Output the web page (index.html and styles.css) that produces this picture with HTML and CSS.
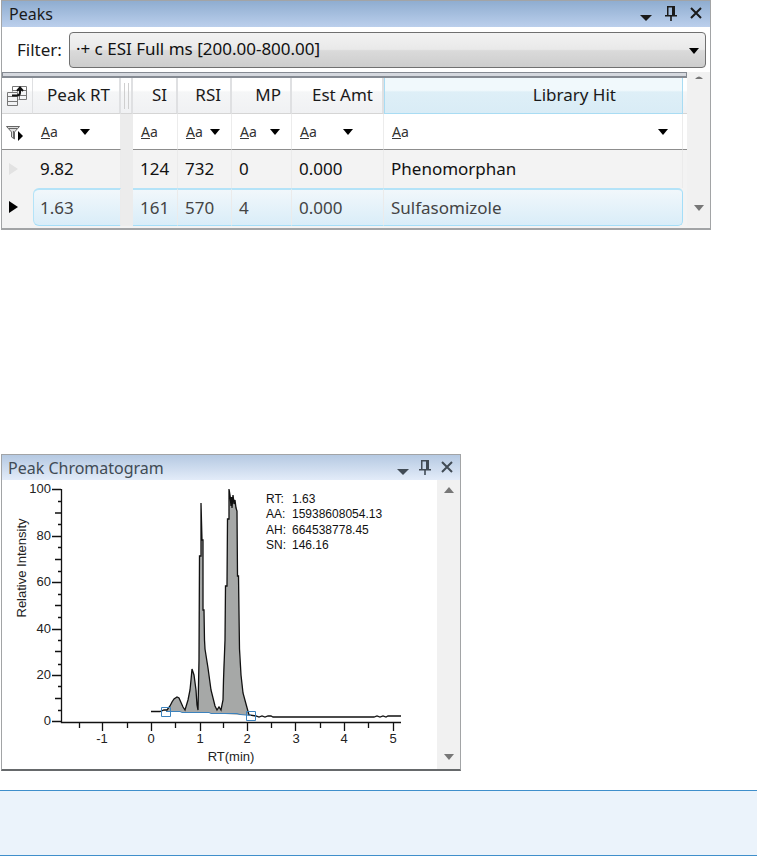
FILE: index.html
```html
<!DOCTYPE html>
<html lang="en">
<head>
<meta charset="utf-8">
<title>Peaks</title>
<link rel="stylesheet" href="styles.css">
</head>
<body>
<section class="panel peaks">
  <header class="titlebar">
    <h2>Peaks</h2>
    <button class="tool" aria-label="Menu"><svg width="14" height="20"><path d="M1 11h12l-6 6z"/></svg></button>
    <button class="tool" aria-label="Pin"><svg width="14" height="20"><path d="M3 2h8v9h2v1.500H7.800V17H6.200v-4.500H1V11h2zM4.500 3.500V11H8V3.500z" fill-rule="evenodd"/></svg></button>
    <button class="tool" aria-label="Close"><svg width="14" height="20"><path d="M2 4l10 10M12 4l-10 10" class="cross"/></svg></button>
  </header>
  <div class="filterbar">
    <label for="filter">Filter:</label>
    <div class="combo">
      <select id="filter"><option>·+ c ESI Full ms [200.00-800.00]</option></select>
      <svg class="combo-arrow" width="12" height="8"><path d="M1 1h10l-5 6z"/></svg>
    </div>
  </div>
  <div class="grid">
    <div class="grid-main">
      <div class="splitter"></div>
      <table>
        <colgroup><col class="c-ind"><col class="c-rt"><col class="c-fix"><col class="c-si"><col class="c-rsi"><col class="c-mp"><col class="c-est"><col><col class="c-end"></colgroup>
        <thead>
          <tr class="names">
            <th class="ind"><svg width="22" height="24" class="chooser"><path d="M6.500 2.500h14v13h-8M13.500 2.500v13M6.500 6.500h14M13.500 11.500h7M6.500 2.500v5M1.500 8.500h10v13h-10zM1.500 12.500h10M1.500 17.500h10"/><path class="strong" d="M6 11.500h5c2 0 3-1 3-3V4M11 7l3-3.500L17 7"/></svg></th>
            <th>Peak RT</th><th class="fix"><span class="grip"></span></th><th>SI</th><th>RSI</th><th>MP</th><th>Est Amt</th><th class="hot">Library Hit</th><th></th>
          </tr>
          <tr class="filters">
            <td class="ind"><svg width="20" height="20"><path class="funnel" d="M1.500 4.500h13L9.500 10v7l-3-2v-5zM4 6.500h8M8.500 9v7"/><path d="M13 9l5 5-5 5z"/></svg></td>
            <td><div class="cond far"><button><u>A</u>a</button><svg width="12" height="8"><path d="M1 1h10l-5 6z"/></svg></div></td>
            <td class="fix"></td>
            <td><div class="cond"><button><u>A</u>a</button></div></td>
            <td><div class="cond"><button><u>A</u>a</button><svg width="12" height="8"><path d="M1 1h10l-5 6z"/></svg></div></td>
            <td><div class="cond"><button><u>A</u>a</button><svg width="12" height="8"><path d="M1 1h10l-5 6z"/></svg></div></td>
            <td><div class="cond far"><button><u>A</u>a</button><svg width="12" height="8"><path d="M1 1h10l-5 6z"/></svg></div></td>
            <td><div class="cond wide"><button><u>A</u>a</button><svg width="12" height="8"><path d="M1 1h10l-5 6z"/></svg></div></td>
            <td></td>
          </tr>
        </thead>
        <tbody>
          <tr class="row"><td class="ind faint"><svg width="11" height="14"><path d="M1 1l9 6-9 6z"/></svg></td><td>9.82</td><td class="fix"></td><td>124</td><td>732</td><td>0</td><td>0.000</td><td>Phenomorphan</td><td></td></tr>
          <tr class="row selected"><td class="ind"><svg width="11" height="14"><path d="M1 1l9 6-9 6z"/></svg></td><td class="cell first">1.63</td><td class="fix"></td><td class="cell">161</td><td class="cell">570</td><td class="cell">4</td><td class="cell">0.000</td><td class="cell last">Sulfasomizole</td><td></td></tr>
        </tbody>
      </table>
    </div>
    <div class="scroll">
      <svg width="10" height="6"><path d="M1 5q4-5 8 0z"/></svg>
      <svg width="10" height="6"><path d="M0 0h10l-5 6z"/></svg>
    </div>
  </div>
</section>

<section class="panel chroma">
  <header class="titlebar">
    <h2>Peak Chromatogram</h2>
    <button class="tool" aria-label="Menu"><svg width="14" height="20"><path d="M1 11h12l-6 6z"/></svg></button>
    <button class="tool" aria-label="Pin"><svg width="14" height="20"><path d="M3 2h8v9h2v1.500H7.800V17H6.200v-4.500H1V11h2zM4.500 3.500V11H8V3.500z" fill-rule="evenodd"/></svg></button>
    <button class="tool" aria-label="Close"><svg width="14" height="20"><path d="M2 4l10 10M12 4l-10 10" class="cross"/></svg></button>
  </header>
  <div class="plot">
    <svg class="chart" viewBox="2 480 435 289" role="img" aria-label="Relative intensity by retention time">
      <path class="area" d="M166 711L170 706L172 702L174 699L177 697L179 698L183 707L185 710L188 700L190 690L191 680L192 669L194 675L196 690L197 705L198 710L199 660V556H201V503L202 540H203V610H204V640L205 649L208 668L211 690L215 706L217 710L219 707L221 710L223 700V680L225 640V586H227V519H229V489L230 495L231 498L232 508L233 495L235 501L237 511V576H239V649L241 675L243 693L246 704L249 715L240 715L210 713L180 712z"/>
      <path class="trace" d="M151 711.500H160L164 710H167L170 706L172 702L174 699L177 697L179 698L183 707L185 710L188 700L190 690L191 680L192 669L194 675L196 690L197 705L198 710L199 660L199.500 556H201V503L202 540H203V610H204L204.500 640L205 649L208 668L211 690L215 706L217 710L219 707L221 710L223 700L223.500 680L225 640L225.500 586H227L227.500 519H229V489L230 495L231 506L231.500 497L232 508L233 495L234 504L235 500L236 508L237 511L237.500 576H238.500L239.500 649L241 675L243 693L246 704L249 715L256 716L259 717L262 716L265 717L268 716L271 716L273 717H374L377 716L380 717L383 716L386 717L388 716H401"/>
      <path class="baseline" d="M166 711.500H180L182 712.500H209L211 713.500H237L240 714.500L251 715.500M161.500 707.500h9v9h-9zM246.500 711.500h9v9h-9z"/>
      <path class="axis" d="M61.500 489V722.500H401M52 489.500h9M52 536.500h9M52 582.500h9M52 629.500h9M52 675.500h9M52 721.500h9M55 513h6M55 559.500h6M55 605.500h6M55 651.500h6M55 698.500h6M58 501.500h3M58 524.500h3M58 547.500h3M58 571.500h3M58 594.500h3M58 617.500h3M58 640.500h3M58 664.500h3M58 686.500h3M58 710.500h3M79.500 722v6M102.500 722v9M127.500 722v6M151.500 722v9M175.500 722v6M200.500 722v9M223.500 722v6M247.500 722v9M271.500 722v6M295.500 722v9M320.500 722v6M344.500 722v9M368.500 722v6M393.500 722v9"/>
      <g class="ylab"><text x="51" y="493">100</text><text x="51" y="540">80</text><text x="51" y="586">60</text><text x="51" y="633">40</text><text x="51" y="679">20</text><text x="51" y="725">0</text></g>
      <g class="xlab"><text x="102" y="743">-1</text><text x="151" y="743">0</text><text x="200" y="743">1</text><text x="247" y="743">2</text><text x="296" y="743">3</text><text x="344" y="743">4</text><text x="393" y="743">5</text><text x="231" y="761">RT(min)</text><text transform="translate(26 568) rotate(-90)">Relative Intensity</text></g>
      <g class="info"><text x="266" y="503">RT:</text><text x="292" y="503">1.63</text><text x="266" y="518">AA:</text><text x="292" y="518">15938608054.13</text><text x="266" y="534">AH:</text><text x="292" y="534">664538778.45</text><text x="266" y="549">SN:</text><text x="292" y="549">146.16</text></g>
    </svg>
    <div class="scroll">
      <svg width="10" height="6"><path d="M0 6h10l-5-6z"/></svg>
      <svg width="10" height="6"><path d="M0 0h10l-5 6z"/></svg>
    </div>
  </div>
</section>
<aside class="band"></aside>
</body>
</html>
```
FILE: styles.css
```css
* { box-sizing: border-box; }
body {
  margin: 0;
  background: #fff;
  color: #1a1a1a;
  font: 17px/24px "Noto Sans", "Open Sans", sans-serif;
}
button { border: 0; padding: 0; background: none; font: inherit; color: inherit; }
svg { display: block; }

.panel { margin-left: 1px; border: 1px solid #a2a4a6; }
.peaks { max-width: 710px; border-bottom-width: 2px; }
.titlebar {
  display: flex;
  align-items: center;
  gap: 11px;
  height: 26px;
  padding: 0 7px;
  background: linear-gradient(#8fadd0, #bbcfec);
}
.titlebar h2 { flex: 1; margin: 0; font-size: 16px; font-weight: 400; }
.tool { height: 24px; }
.cross { fill: none; stroke: currentColor; stroke-width: 2; }
.tool path:not(.cross) { fill: currentColor; }

.filterbar {
  display: flex;
  align-items: center;
  gap: 7px;
  height: 45px;
  padding: 0 4px 0 15px;
}
.combo { position: relative; flex: 1; }
.combo select {
  display: block;
  width: 100%;
  height: 36px;
  padding: 0 6px 2px;
  appearance: none;
  border: 1px solid #707070;
  border-radius: 4px;
  background: linear-gradient(#f2f2f2, #e9e9e9 48%, #dadada 52%, #cdcdcd);
  color: #111;
  font: inherit;
}
.combo-arrow { position: absolute; right: 6px; top: 15px; }

.grid { display: flex; padding-bottom: 2px; background: #f3f3f3; }
.grid-main { flex: 1; min-width: 0; }
.splitter {
  height: 6px;
  border: 1px solid #858a92;
  border-bottom-width: 2px;
  background: #d5d8de;
}
table { width: 100%; table-layout: fixed; border-collapse: separate; border-spacing: 0; }
th, td { padding: 0 0 0 7px; text-align: left; font-weight: 400; white-space: nowrap; }
.c-ind { width: 31px; }
.c-rt { width: 88px; }
.c-fix { width: 12px; }
.c-si { width: 45px; }
.c-rsi { width: 54px; }
.c-mp { width: 60px; }
.c-est { width: 92px; }
.c-end { width: 4px; }
.names th {
  height: 36px;
  padding: 0 9px 2px 0;
  text-align: right;
  background: linear-gradient(#fff 35%, #f5f6f7 40%, #f0f1f3);
  border-right: 2px solid #dfe0e2;
  border-bottom: 1px solid #d5d5d5;
}
.names th.ind { padding: 0 0 0 4px; border-right-width: 1px; }
.names th.fix { padding: 0 0 0 3px; }
.names th:last-child { padding: 0; border-right: 0; }
.names th.hot {
  padding-right: 66px;
  background: linear-gradient(#f1f9fc 35%, #deeff7 40%, #d9ecf6);
  border-right: 1px solid #a9dcf3;
  border-left: 1px solid #a9dcf3;
  border-bottom-color: #a9dcf3;
}
.grip { display: block; width: 5px; height: 26px; border: solid #cfcfcf; border-width: 0 1px; }
.chooser { fill: none; stroke: #777; }
.chooser .strong { stroke: #111; stroke-width: 2; }
.filters { background: #fff; }
.filters td { height: 36px; padding-left: 8px; border-right: 1px solid #ececec; border-bottom: 1px solid #8d8d8d; }
td.ind, .filters td.ind { padding: 0 0 0 3px; border-right: 0; }
td:last-child, .filters td:last-child { padding: 0; border-right: 0; }
td.fix, .filters td.fix { padding: 0; background: #ececec; border: 0; }
.funnel { fill: #ddd; stroke: #666; }
.cond { display: flex; align-items: center; justify-content: space-between; padding-right: 10px; }
.cond.far { padding-right: 29px; }
.cond.wide { padding-right: 13px; }
.cond button { font-size: 14px; line-height: 20px; color: #333; }
.row { background: #f3f3f3; }
.row td { height: 38px; border-right: 1px solid #ebebeb; color: #111; }
.row td.ind { padding-left: 6px; border-right: 0; }
.row td.fix, .row td:last-child { border-right: 0; }
.faint svg { fill: #e2e2e2; }
.row.selected td { color: #444; }
.row.selected .cell {
  background: linear-gradient(#f1f7fb, #d9edf8);
  border-top: 2px solid #b4e3f8;
  border-bottom: 1px solid #a5def8;
}
.row.selected .first { padding-left: 6px; border-left: 1px solid #b4e3f8; border-radius: 6px 0 0 6px; }
.row.selected .last { border-right: 1px solid #a5def8; border-radius: 0 5px 5px 0; }
.scroll {
  display: flex;
  flex-direction: column;
  align-items: center;
  justify-content: space-between;
  width: 23px;
  padding: 2px 0 15px;
  background: #f1f1f1;
  fill: #777;
}

.chroma { max-width: 460px; margin-top: 224px; border-bottom: 2px solid #66696b; color: #414b55; }
.chroma .titlebar { gap: 8px; height: 25px; padding: 0 6px; background: linear-gradient(#b5c9e2, #e3ecf9); }
.plot { display: flex; background: #fff; }
.chart { flex: 1; min-width: 0; }
.plot .scroll { padding: 7px 0 9px; }
.chart text { font: 13px "Liberation Sans", sans-serif; fill: #222; }
.chart .info text { font-size: 12px; fill: #111; }
.ylab { text-anchor: end; }
.xlab { text-anchor: middle; }
.axis, .trace, .baseline { fill: none; stroke: #111; }
.axis, .trace { stroke-width: 1.3; }
.area { fill: #a6a8a7; }
.baseline { stroke: #3c82bd; }

.band {
  height: 66px;
  margin-top: 19px;
  border: solid #3f8fcb;
  border-width: 1px 0;
  background: #ebf3fb;
}
```
